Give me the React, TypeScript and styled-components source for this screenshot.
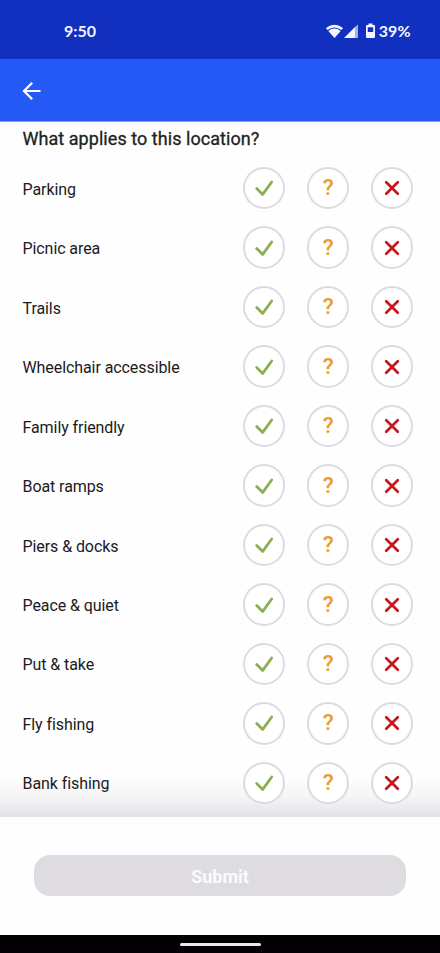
import React from "react";
import styled, { createGlobalStyle } from "styled-components";

const GlobalStyle = createGlobalStyle`
  * { box-sizing: border-box; }
  body { margin: 0; background: #fefefe; font-family: Roboto, sans-serif; }
`;

const Screen = styled.div`
  display: flex;
  flex-direction: column;
  width: 440px;
  height: 953px;
  overflow: hidden;
  background: #fefefe;
`;

const StatusBar = styled.div`
  display: flex;
  align-items: center;
  justify-content: space-between;
  height: 59px;
  flex: none;
  padding: 4px 29.5px 0 64px;
  background: #1230bf;
  color: #f4f5ff;
  font-family: Lato, sans-serif;
  font-weight: 700;
  font-size: 16px;
`;

const Clock = styled.span`
  margin-top: -2px;
  font-size: 16px;
`;

const StatusIcons = styled.div`
  display: flex;
  align-items: center;
  svg { display: block; }
`;

const Percent = styled.span`
  margin: -2px 0 0 3px;
`;

const AppBar = styled.header`
  display: flex;
  align-items: center;
  height: 63px;
  flex: none;
  padding: 1px 0 0 22px;
  border-bottom: 1px solid #7b9cf8;
  background: #2459f5;
`;

const BackButton = styled.button`
  display: flex;
  padding: 0;
  border: 0;
  background: none;
`;

const Content = styled.main`
  display: flex;
  flex-direction: column;
  height: 695px;
  flex: none;
  padding: 6px 27px 0 22.5px;
  background: linear-gradient(to bottom, #fefefe 0, #fefefe 655px, #f5f4f6 675px, #e3e1e4 695px);
`;

const Title = styled.h1`
  margin: 0 0 8.5px;
  height: 22px;
  line-height: 22px;
  font-size: 18px;
  font-weight: 400;
  letter-spacing: 0.05px;
  -webkit-text-stroke: 0.3px #202322;
  color: #202322;
`;

const Row = styled.div`
  display: flex;
  align-items: center;
  justify-content: space-between;
  height: 59.47px;
  flex: none;
`;

const Label = styled.span`
  padding-top: 3px;
  font-size: 16px;
  letter-spacing: -0.08px;
  line-height: 20px;
  color: #1b1b1e;
`;

const Choices = styled.div`
  display: flex;
  gap: 21.5px;
`;

const Choice = styled.button<{ $color: string }>`
  display: flex;
  align-items: center;
  justify-content: center;
  width: 42.5px;
  height: 42.5px;
  padding: 0;
  border: 2px solid #dddbe2;
  border-radius: 50%;
  background: #fff;
  color: ${(p) => p.$color};
  font-family: Roboto, sans-serif;
  svg { display: block; }
`;

const Question = styled.span`
  height: 26px;
  padding-left: 1px;
  line-height: 24px;
  font-size: 22.5px;
  font-weight: 500;
`;

const Footer = styled.footer`
  display: flex;
  justify-content: center;
  height: 118px;
  flex: none;
  padding-top: 38px;
`;

const Submit = styled.button`
  width: 372px;
  height: 41px;
  padding: 2px 0 0;
  border: 0;
  border-radius: 16px;
  background: #dedce0;
  color: #fbfbfc;
  font-family: Roboto, sans-serif;
  font-size: 18px;
  font-weight: 700;
`;

const NavBar = styled.div`
  display: flex;
  justify-content: center;
  flex: 1;
  padding-top: 8px;
  background: #020003;
`;

const Handle = styled.div`
  width: 81px;
  height: 3px;
  border-radius: 2px;
  background: #eae7ec;
`;

const features = [
  "Parking", "Picnic area", "Trails", "Wheelchair accessible", "Family friendly",
  "Boat ramps", "Piers & docks", "Peace & quiet", "Put & take", "Fly fishing", "Bank fishing",
];

const CheckIcon = () => (
  <svg width="20" height="20" viewBox="0 0 20 20" fill="none" stroke="currentColor" strokeWidth="2.8" strokeLinecap="round" strokeLinejoin="round">
    <path d="M2.700 10.400l6 6L17.700 4" />
  </svg>
);

const CrossIcon = () => (
  <svg width="20" height="20" viewBox="0 0 20 20" stroke="currentColor" strokeWidth="2.700" strokeLinecap="round">
    <path d="M4.200 4.200l11.600 11.600M15.800 4.200l-11.600 11.600" />
  </svg>
);

const DeviceIcons = () => (
  <svg width="50" height="18" viewBox="0 0 50 18" fill="#f4f5ff">
    <path d="M0 5Q8.500-1.500 17 5L15.500 7Q8.500 2 1.500 7Z" />
    <path d="M2.300 7.900Q8.500 3.300 14.700 7.900L8.500 15Z" />
    <path d="M18 15L29 4V15Z" />
    <path d="M29 4L32 1.500V15H29Z" opacity=".65" />
    <path fillRule="evenodd" d="M42.500 .5h4v1.500H48q1 0 1 1V14q0 1-1 1h-7q-1 0-1-1V3q0-1 1-1h1.500zM41.800 4.200v4.800h5.400V4.200z" />
  </svg>
);

export default function App() {
  return (
    <>
      <GlobalStyle />
      <Screen>
        <StatusBar>
          <Clock>9:50</Clock>
          <StatusIcons>
            <DeviceIcons />
            <Percent>39%</Percent>
          </StatusIcons>
        </StatusBar>
        <AppBar>
          <BackButton aria-label="Back">
            <svg width="20" height="20" viewBox="0 0 20 20" fill="none" stroke="#fff" strokeWidth="2.2">
              <path d="M18.500 10H2.500M10.200 1.800L2 10l8.200 8.200" />
            </svg>
          </BackButton>
        </AppBar>
        <Content>
          <Title>What applies to this location?</Title>
          {features.map((name) => (
            <Row key={name}>
              <Label>{name}</Label>
              <Choices>
                <Choice $color="#8ab052" aria-label="Yes"><CheckIcon /></Choice>
                <Choice $color="#eb9c2d" aria-label="Unknown"><Question>?</Question></Choice>
                <Choice $color="#c4171e" aria-label="No"><CrossIcon /></Choice>
              </Choices>
            </Row>
          ))}
        </Content>
        <Footer>
          <Submit>Submit</Submit>
        </Footer>
        <NavBar>
          <Handle />
        </NavBar>
      </Screen>
    </>
  );
}
